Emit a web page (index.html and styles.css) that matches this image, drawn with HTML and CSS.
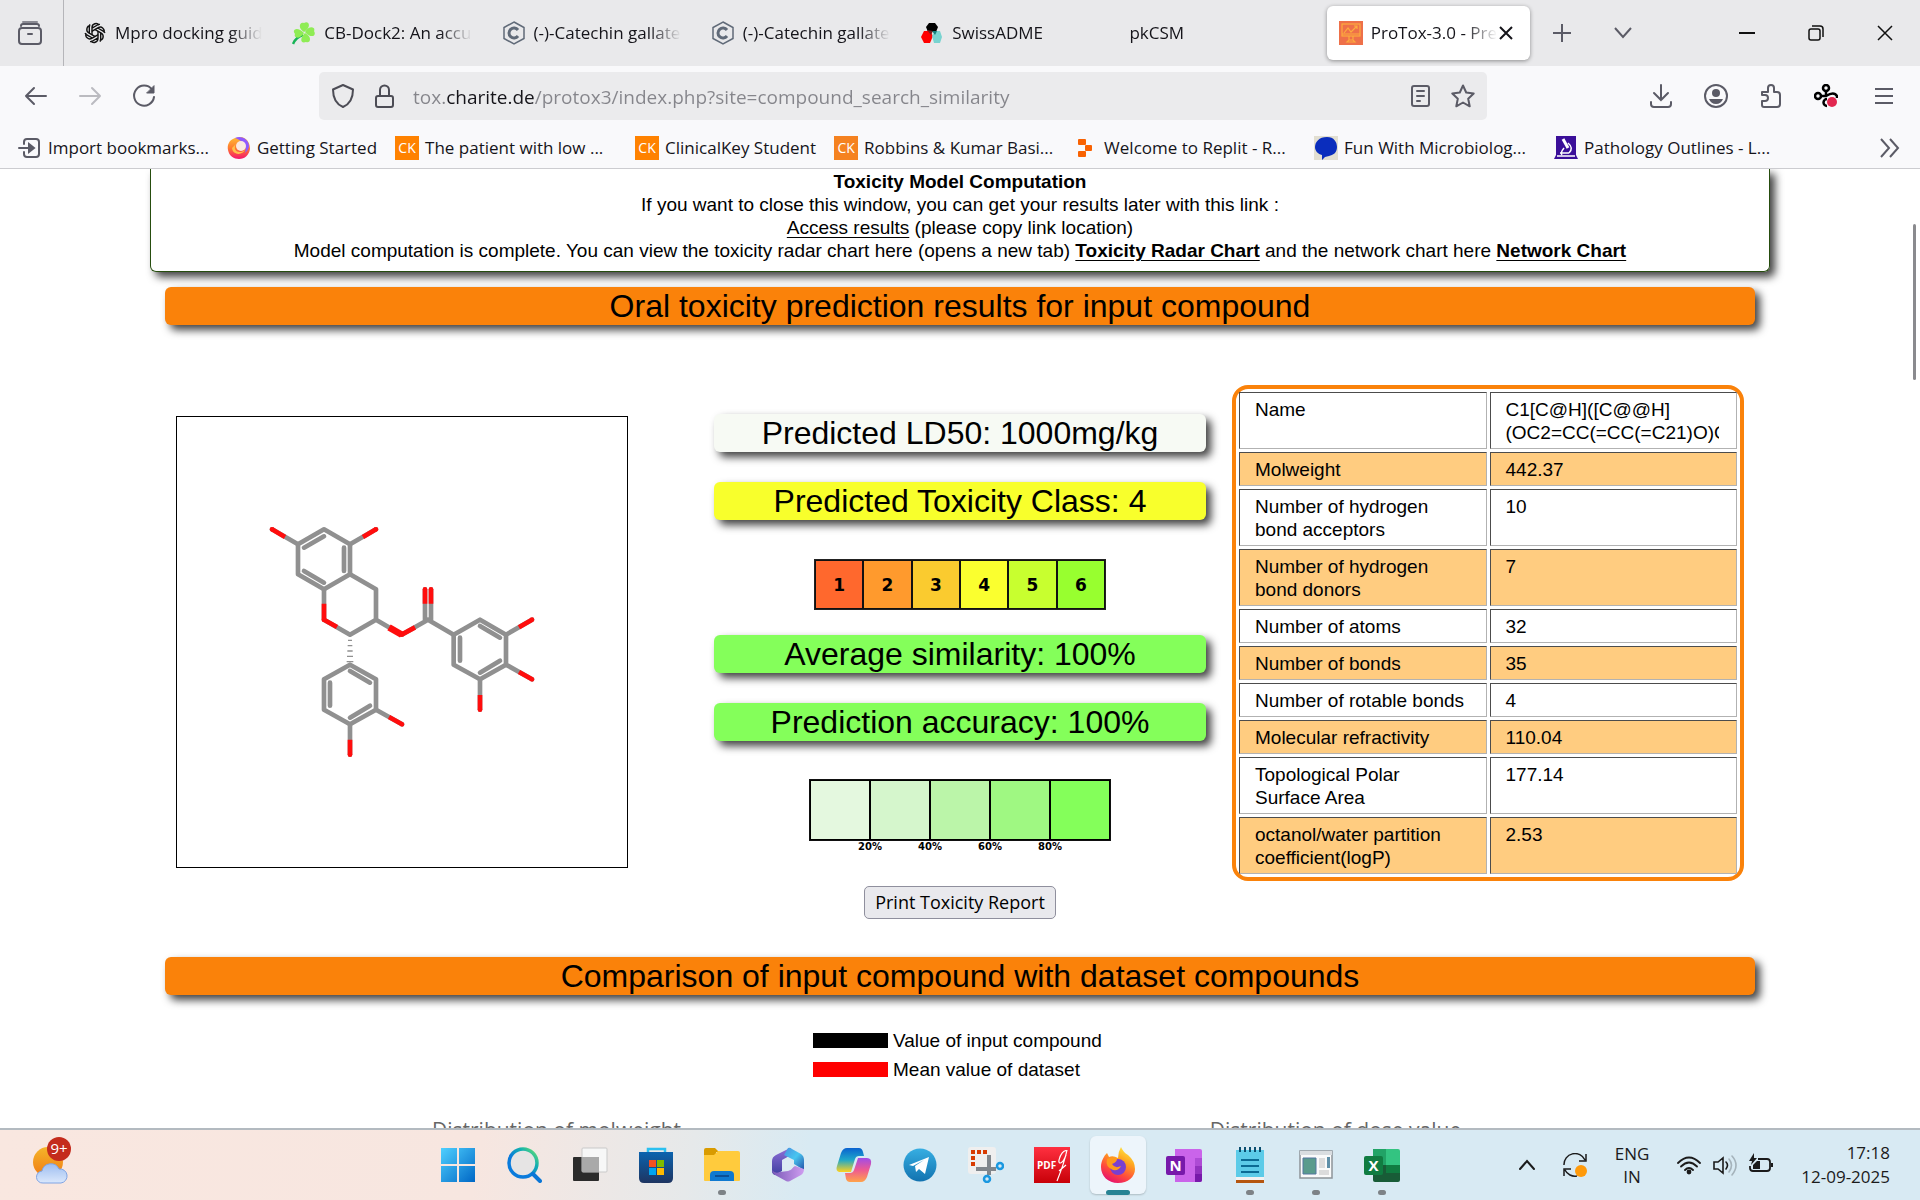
FILE: index.html
```html
<!DOCTYPE html>
<html lang="en">
<head>
<meta charset="utf-8">
<title>ProTox-3.0 - Prediction of toxicity of chemicals</title>
<link rel="stylesheet" href="styles.css">
</head>
<body>
<header class="browser">
  <div class="tabbar">
    <button class="recent" aria-label="Recent browsing"><svg width="24" height="24" viewBox="0 0 24 24" fill="none" stroke="#5b5b66" stroke-width="2" stroke-linecap="round"><path d="M5 1h14" stroke="#8a8a93"/><path d="M3 5c0-1 .5-2 2-2h14c1.500 0 2 1 2 2"/><rect x="1" y="7" width="22" height="16" rx="3"/><path d="M10 13h4"/></svg></button>
    <nav class="tabs" aria-label="Tabs">
      <button class="tab"><svg class="fav" viewBox="0 0 24 24" fill="none" stroke="#111" stroke-width="1.400" stroke-linejoin="round"><g id="petal"><path d="M9 14V6.500a4 4 0 0 1 7.200-2.300M9 7.200l5.500-3.200a4 4 0 0 1 2.500-.6"/></g><use href="#petal" transform="rotate(60 12 12)"/><use href="#petal" transform="rotate(120 12 12)"/><use href="#petal" transform="rotate(180 12 12)"/><use href="#petal" transform="rotate(240 12 12)"/><use href="#petal" transform="rotate(300 12 12)"/></svg><span class="title">Mpro docking guide</span></button>
      <button class="tab"><svg class="fav" viewBox="0 0 24 24"><path d="M11 14Q4 16 1 23" fill="none" stroke="#18b457" stroke-width="2.500"/><g fill="#8fec55"><path d="M12 11C5 7 8 0 12 2c5-3 8 4 0 9z"/><path d="M13 11c4-7 11-5 9-1 3 5-3 8-9 1z"/><path d="M13 12c8 4 5 11 1 9-5 2-7-3-1-9z"/><path d="M12 12c-4 7-11 5-9 1-4-5 3-8 9-1z"/></g></svg><span class="title">CB-Dock2: An accurate</span></button>
      <button class="tab"><svg class="fav" viewBox="0 0 24 24" fill="none" stroke="#606a78"><path d="M12 1l10 5.500v11L12 23 2 17.500v-11z" stroke-width="1.500"/><path d="M16 9a5 5 0 1 0 0 6" stroke-width="3"/></svg><span class="title">(-)-Catechin gallate</span></button>
      <button class="tab"><svg class="fav" viewBox="0 0 24 24" fill="none" stroke="#606a78"><path d="M12 1l10 5.500v11L12 23 2 17.500v-11z" stroke-width="1.500"/><path d="M16 9a5 5 0 1 0 0 6" stroke-width="3"/></svg><span class="title">(-)-Catechin gallate</span></button>
      <button class="tab"><svg class="fav" viewBox="0 0 24 24"><path d="M9 2h6l3 4-2 5H8L6 6z" fill="#000"/><path d="M4 10h6l3 5-3 7H4l-3-6z" fill="#f00"/><path d="M15 10h5l2 6-2 6h-6l-2-7z" fill="#79d3d0"/><path d="M7 9l6 1-2 4z" fill="#7a1d1d"/><path d="M12 10h5l-2 4z" fill="#157e7c"/></svg><span class="title">SwissADME</span></button>
      <button class="tab"><span class="title">pkCSM</span></button>
      <div class="tab active"><svg class="fav" viewBox="0 0 24 24" fill="none" stroke="#fdab3f" stroke-width="1.200"><path d="M0 0h24v24H0z" fill="#ee7049" stroke="none"/><rect x="3" y="3" width="18" height="12"/><path d="M5 12l4-5 3 4 6-6M15 5h3v3M3 13h18M10 15v4h4v-4M8 21l2-2h4l2 2z"/></svg><span class="title">ProTox-3.0 - Prediction</span><button class="close" aria-label="Close tab"><svg width="14" height="14" viewBox="0 0 14 14" stroke="#15141a" stroke-width="2"><path d="M1 1l12 12M13 1L1 13"/></svg></button></div>
    </nav>
    <div class="tabtools">
      <button aria-label="New tab"><svg width="18" height="18" viewBox="0 0 18 18" stroke="#5b5b66" stroke-width="2"><path d="M9 0v18M0 9h18"/></svg></button>
      <button aria-label="List all tabs"><svg width="18" height="18" viewBox="0 0 18 18" fill="none" stroke="#5b5b66" stroke-width="2"><path d="M1 4l8 9 8-9"/></svg></button>
    </div>
    <div class="winctl">
      <button aria-label="Minimise"><svg width="16" height="16" viewBox="0 0 16 16" stroke="#111" stroke-width="2"><path d="M0 8h16"/></svg></button>
      <button aria-label="Restore"><svg width="16" height="16" viewBox="0 0 16 16" fill="none" stroke="#111" stroke-width="1.500"><rect x="1" y="4" width="11" height="11" rx="2"/><path d="M4 1h8q3 0 3 3v8"/></svg></button>
      <button aria-label="Close"><svg width="16" height="16" viewBox="0 0 16 16" stroke="#111" stroke-width="1.500"><path d="M1 1l14 14M15 1L1 15"/></svg></button>
    </div>
  </div>
  <div class="navbar">
    <div class="history">
      <button aria-label="Back"><svg width="24" height="24" viewBox="0 0 24 24" fill="none" stroke="#5b5b66" stroke-width="2" stroke-linecap="round" stroke-linejoin="round"><path d="M22 12H2M10 4l-8 8 8 8"/></svg></button>
      <button aria-label="Forward" disabled><svg width="24" height="24" viewBox="0 0 24 24" fill="none" stroke="#bbbbc0" stroke-width="2" stroke-linecap="round" stroke-linejoin="round"><path d="M2 12h20M14 4l8 8-8 8"/></svg></button>
      <button aria-label="Reload"><svg width="24" height="24" viewBox="0 0 24 24" fill="none" stroke="#5b5b66" stroke-width="2" stroke-linecap="round"><path d="M20 5.500A10 10 0 1 0 22 13"/><path d="M22 2v7h-7z" fill="#5b5b66" stroke-width="1"/></svg></button>
    </div>
    <div class="urlbar">
      <svg width="24" height="24" viewBox="0 0 24 24" fill="none" stroke="#4c4c55" stroke-width="2" stroke-linejoin="round"><path d="M12 1l10 4.500C22 14 19 20 12 23 5 20 2 14 2 5.500z"/></svg>
      <svg width="24" height="24" viewBox="0 0 24 24" fill="none" stroke="#4c4c55" stroke-width="2"><rect x="4" y="12" width="17" height="11" rx="2"/><path d="M8 12V6a4.500 4.500 0 0 1 9 0v6"/></svg>
      <input class="url" type="text" aria-label="Address" value="tox.charite.de/protox3/index.php?site=compound_search_similarity">
      <button aria-label="Reader view"><svg width="24" height="24" viewBox="0 0 24 24" fill="none" stroke="#5b5b66" stroke-width="2" stroke-linecap="round"><rect x="2" y="2" width="17" height="20" rx="2"/><path d="M7 7h7M7 12h7M7 17h3"/></svg></button>
      <button aria-label="Bookmark this page"><svg width="24" height="24" viewBox="0 0 24 24" fill="none" stroke="#5b5b66" stroke-width="2" stroke-linejoin="round"><path d="M12 1.500l3.200 7 7.500 1-5.500 5.200 1.500 7.600L12 18.500l-6.700 3.800 1.500-7.600L1.300 9.500l7.500-1z"/></svg></button>
    </div>
    <div class="navtools">
      <button aria-label="Downloads"><svg width="24" height="24" viewBox="0 0 24 24" fill="none" stroke="#5b5b66" stroke-width="2" stroke-linecap="round"><path d="M12 1v15M5 9l7 7 7-7M2 18v2q0 3 3 3h14q3 0 3-3v-2"/></svg></button>
      <button aria-label="Account"><svg width="24" height="24" viewBox="0 0 24 24"><circle cx="12" cy="12" r="11" fill="none" stroke="#5b5b66" stroke-width="2"/><circle cx="12" cy="9" r="4" fill="#5b5b66"/><path d="M5 15h14q-2 5-7 5t-7-5z" fill="#5b5b66"/></svg></button>
      <button aria-label="Extensions"><svg width="24" height="24" viewBox="0 0 24 24" fill="none" stroke="#5b5b66" stroke-width="2" stroke-linejoin="round"><path d="M3 8h6V4a3 3 0 0 1 6 0v4h3q3 0 3 3v9q0 3-3 3H5q-2 0-2-2v-4h3a3 3 0 0 0 0-6H3z"/></svg></button>
      <button aria-label="Proxy extension"><svg width="24" height="24" viewBox="0 0 24 24" fill="none" stroke="#000" stroke-width="2.500"><circle cx="12" cy="4" r="3"/><circle cx="4" cy="12" r="3"/><path d="M7 12h5q8-5 11 0v2M12 7v5"/><path d="M13 15a3.500 3.500 0 0 0 0 7"/><circle cx="18" cy="18" r="5" fill="#e22850" stroke="none"/></svg></button>
      <button aria-label="Menu"><svg width="24" height="24" viewBox="0 0 24 24" stroke="#5b5b66" stroke-width="2"><path d="M6 5h18M6 12h18M6 19h18"/></svg></button>
    </div>
  </div>
  <nav class="bookmarks" aria-label="Bookmarks">
    <a href="#"><svg width="24" height="24" viewBox="0 0 24 24" fill="none" stroke="#5b5b66" stroke-width="2" stroke-linecap="round"><path d="M6 8V6q0-3 3-3h9q3 0 3 3v12q0 3-3 3H9q-3 0-3-3v-2M1 12h13"/><path d="M11 8l5 4-5 4z" fill="#5b5b66"/></svg>Import bookmarks...</a>
    <a href="#"><svg width="24" height="24" viewBox="0 0 24 24"><defs><linearGradient id="gs" x1="0" y1="0" x2="0" y2="1"><stop offset="0" stop-color="#ffbd35"/><stop offset=".5" stop-color="#ff7b2f"/><stop offset="1" stop-color="#f5156c"/></linearGradient></defs><path d="M8 2C2 4 0 9 1 14c1 6 6 9 11 9 6 0 10-4 11-10 0-5-2-10-8-12z" fill="url(#gs)"/><path d="M8 2c7-3 14 2 14 8 0 3-2 5-4 7 2-6-1-12-10-15z" fill="#9059ff"/><circle cx="14" cy="10" r="5" fill="#fbe8e0"/><path d="M9 8c-4 6 3 11 9 6-2 5-12 6-13-2z" fill="#ffc14b"/></svg>Getting Started</a>
    <a href="#" class="cut"><i class="ck">CK</i>The patient with low ...</a>
    <a href="#"><i class="ck">CK</i>ClinicalKey Student</a>
    <a href="#" class="cut"><i class="ck soft">CK</i>Robbins &amp; Kumar Basi...</a>
    <a href="#" class="cut"><svg width="24" height="24" viewBox="0 0 24 24" fill="#f96202"><rect x="4" y="3" width="8" height="6" rx="1"/><rect x="11" y="9" width="7" height="6" rx="1"/><rect x="4" y="15" width="8" height="6" rx="1"/></svg>Welcome to Replit - R...</a>
    <a href="#" class="cut"><svg width="24" height="24" viewBox="0 0 24 24"><path d="M0 0h24v24H0z" fill="#e2dfd2"/><path d="M13 1c7 0 10 5 10 10 0 6-4 8-8 9l-4 1-3 3v-5c-4-1-7-4-7-8C1 6 5 1 13 1z" fill="#0a2dbd"/></svg>Fun With Microbiolog...</a>
    <a href="#" class="cut"><svg width="24" height="24" viewBox="0 0 24 24" fill="none" stroke="#fff" stroke-width="1.500"><path d="M2 0h20v19l2 4H0l2-4z" fill="#3b0f99" stroke="none"/><path d="M3 20h18M6 17h9" /><path d="M9 3l5 9" stroke-width="3"/><path d="M14 7q6 5 1 10M10 12q-4 5-2 7"/></svg>Pathology Outlines - L...</a>
    <button class="more" aria-label="More bookmarks"><svg width="24" height="24" viewBox="0 0 24 24" fill="none" stroke="#5b5b66" stroke-width="2"><path d="M3 3l8 9-8 9M12 3l8 9-8 9"/></svg></button>
  </nav>
</header>

<main class="page">
  <section class="notice">
    <strong>Toxicity Model Computation</strong>
    <p>If you want to close this window, you can get your results later with this link :</p>
    <p><a href="#">Access results</a> (please copy link location)</p>
    <p>Model computation is complete. You can view the toxicity radar chart here (opens a new tab) <a href="#"><b>Toxicity Radar Chart</b></a> and the network chart here <a href="#"><b>Network Chart</b></a></p>
  </section>

  <h1 class="bar orange">Oral toxicity prediction results for input compound</h1>

  <section class="results">
    <div class="molecule">
      <svg viewBox="51 51 1350 1350" fill="none" stroke="#909090" stroke-width="14" stroke-linecap="round" stroke-linejoin="round">
        <path d="M414 433L492 388 570 433V523L492 568 414 523zM432 443L492 409M552 443V513M492 548L432 513"/>
        <path d="M570 523L648 568V659L570 704 492 659V568M648 659L725 704 804 659 881 704M795 659V568M813 659V568"/>
        <path d="M881 704L960 659 1038 704V794L960 838 881 794zM960 678L1020 713M1020 782L960 818M900 713V782"/>
        <path d="M570 794L648 838V929L570 973 492 929V838zM570 813L630 848M630 917L570 953M510 848V917"/>
        <path d="M414 433L336 388M570 433L648 388M1038 704L1116 659M1038 794L1116 838M960 838V929M648 929L726 973M570 973V1064"/>
        <g stroke="#ff0d0d" stroke-linecap="butt"><path d="M492 611V659L531 681M765 682L725 704M795 611V568M813 611V568M375 411L336 388M609 411L648 388M1077 682L1116 659M1077 816L1116 838M960 885V929M687 951L726 973M570 1019V1064"/><path d="M687 682L725 704" stroke-width="20"/></g>
        <g stroke="#ff0d0d"><path d="M492 659h0M725 704h0M795 568h0M813 568h0M336 388h0M648 388h0M1116 659h0M1116 838h0M960 929h0M726 973h0M570 1064h0"/></g>
        <path d="M564 721h12M563 737h14M562 753h16M561 769h18M560 785h20" stroke-width="4" stroke-linecap="butt"/>
      </svg>
    </div>

    <div class="scores">
      <h2 class="bar pale">Predicted LD50: 1000mg/kg</h2>
      <h2 class="bar yellow">Predicted Toxicity Class: 4</h2>
      <ol class="classes">
        <li class="c1">1</li><li class="c2">2</li><li class="c3">3</li><li class="c4">4</li><li class="c5">5</li><li class="c6">6</li>
      </ol>
      <h2 class="bar green">Average similarity: 100%</h2>
      <h2 class="bar green">Prediction accuracy: 100%</h2>
      <div class="percent">
        <div class="cells"><span class="p1"></span><span class="p2"></span><span class="p3"></span><span class="p4"></span><span class="p5"></span></div>
        <div class="ticks"><span>20%</span><span>40%</span><span>60%</span><span>80%</span></div>
      </div>
      <button class="print">Print Toxicity Report</button>
    </div>

    <table class="props">
      <tr><th scope="row">Name</th><td><div class="smiles">C1[C@H]([C@@H]<br>(OC2=CC(=CC(=C21)O)O)</div></td></tr>
      <tr><th scope="row">Molweight</th><td>442.37</td></tr>
      <tr><th scope="row">Number of hydrogen bond acceptors</th><td>10</td></tr>
      <tr><th scope="row">Number of hydrogen bond donors</th><td>7</td></tr>
      <tr><th scope="row">Number of atoms</th><td>32</td></tr>
      <tr><th scope="row">Number of bonds</th><td>35</td></tr>
      <tr><th scope="row">Number of rotable bonds</th><td>4</td></tr>
      <tr><th scope="row">Molecular refractivity</th><td>110.04</td></tr>
      <tr><th scope="row">Topological Polar Surface Area</th><td>177.14</td></tr>
      <tr><th scope="row">octanol/water partition coefficient(logP)</th><td>2.53</td></tr>
    </table>
  </section>

  <h1 class="bar orange">Comparison of input compound with dataset compounds</h1>

  <ul class="legend">
    <li><span class="swatch black"></span>Value of input compound</li>
    <li><span class="swatch red"></span>Mean value of dataset</li>
  </ul>

  <section class="charts">
    <h3>Distribution of molweight</h3>
    <h3>Distribution of dose value</h3>
  </section>
  <div class="scrollthumb"></div>
</main>

<footer class="taskbar">
  <button class="widgets" aria-label="Weather">
    <svg width="40" height="40" viewBox="0 0 40 40"><defs><linearGradient id="sun" x1="0" y1="0" x2="0" y2="1"><stop offset="0" stop-color="#f5b52a"/><stop offset="1" stop-color="#f07a13"/></linearGradient><linearGradient id="cloud" x1="0" y1="0" x2="0" y2="1"><stop offset="0" stop-color="#9dbdf0"/><stop offset="1" stop-color="#dbe8fc"/></linearGradient></defs><circle cx="17" cy="17" r="15" fill="url(#sun)"/><path d="M12 38a6 6 0 0 1-1-12 9 9 0 0 1 17-2 7 7 0 0 1 2 14z" fill="url(#cloud)" stroke="#7fa4e4"/></svg>
    <span class="badge">9+</span>
  </button>
  <nav class="apps" aria-label="Pinned apps">
    <button aria-label="Start"><svg viewBox="0 0 36 36"><defs><linearGradient id="win" x1="0" y1="0" x2="1" y2="1"><stop offset="0" stop-color="#4fd0ff"/><stop offset="1" stop-color="#0067c5"/></linearGradient></defs><path d="M1 1h16v16H1zM19 1h16v16H19zM1 19h16v16H1zM19 19h16v16H19z" fill="url(#win)"/></svg></button>
    <button aria-label="Search"><svg viewBox="0 0 36 36" fill="none"><defs><linearGradient id="srch" x1="0" y1="1" x2="1" y2="0"><stop offset=".4" stop-color="#0a7bdc"/><stop offset=".7" stop-color="#12b0b0"/><stop offset="1" stop-color="#6fe36c"/></linearGradient></defs><circle cx="17" cy="16" r="14" fill="#e6e4e4" stroke="url(#srch)" stroke-width="3.500"/><path d="M27 27l7 7" stroke="#0a76d6" stroke-width="4" stroke-linecap="round"/></svg></button>
    <button aria-label="Task view"><svg viewBox="0 0 36 36"><rect x="1" y="10" width="26" height="24" rx="1" fill="#2b2b2b"/><rect x="10" y="1" width="25" height="24" rx="1" fill="#f7f7f7" stroke="#c9c9c9"/><path d="M10 10h17v15H10z" fill="#a9a9a9"/></svg></button>
    <button aria-label="Store"><svg viewBox="0 0 36 36"><defs><linearGradient id="store" x1="0" y1="0" x2="0" y2="1"><stop offset="0" stop-color="#0b63af"/><stop offset="1" stop-color="#1e3561"/></linearGradient></defs><path d="M10 6V2h17v4" fill="none" stroke="#2bc0f0" stroke-width="2.500"/><path d="M1 5h34v26q0 5-5 5H6q-5 0-5-5z" fill="url(#store)"/><path d="M11 13h7v7h-7z" fill="#f25022"/><path d="M19 13h7v7h-7z" fill="#7fba00"/><path d="M11 21h7v7h-7z" fill="#00a4ef"/><path d="M19 21h7v7h-7z" fill="#ffb900"/></svg></button>
    <button aria-label="File Explorer" class="open"><svg viewBox="0 0 36 36"><path d="M0 3q0-2 2-2h9l4 4h-3v4H0z" fill="#d99b00"/><path d="M0 8h10l4-4h20q2 0 2 2v27q0 1-1 1H1q-1 0-1-1z" fill="#ffcb3d"/><path d="M6 34V28q0-4 4-4h16q4 0 4 4v6z" fill="#0f79d0"/><path d="M11 29h14" stroke="#0a4f97" stroke-width="2"/></svg></button>
    <button aria-label="Microsoft 365"><svg viewBox="0 0 36 36"><defs><linearGradient id="m3" x1="0" y1="0" x2="0" y2="1"><stop offset="0" stop-color="#8f6fd8"/><stop offset="1" stop-color="#3e3fa0"/></linearGradient><linearGradient id="m4" x1="0" y1="0" x2="1" y2="1"><stop offset="0" stop-color="#4a8fe0"/><stop offset=".5" stop-color="#48c6f0"/><stop offset="1" stop-color="#2450a8"/></linearGradient><linearGradient id="m5" x1="0" y1="0" x2="1" y2="0"><stop offset="0" stop-color="#7a5ab8"/><stop offset="1" stop-color="#cf9df0"/></linearGradient></defs><path d="M20 1L6 8q-4 2-4 6v10q0 3 3 4l7-4V13l9-5z" fill="url(#m3)"/><path d="M18 1q2-1 4 1l9 5q3 2 3 6v10l-10-6v-4l-10-5z" fill="url(#m4)"/><path d="M34 22q0 4-3 6l-11 6q-2 1-4 0L5 28q-3-2-3-5 3 4 8 2l8-1 7-5z" fill="url(#m5)"/><circle cx="18" cy="18" r="5.500" fill="#dcebf3"/></svg></button>
    <button aria-label="Copilot"><svg viewBox="0 0 36 36"><defs><linearGradient id="cp1" x1="0" y1="0" x2="0" y2="1"><stop offset="0" stop-color="#0a62d0"/><stop offset=".5" stop-color="#20a8c9"/><stop offset="1" stop-color="#ffd21d"/></linearGradient><linearGradient id="cp2" x1="0" y1="0" x2="0" y2="1"><stop offset="0" stop-color="#a04ce8"/><stop offset=".5" stop-color="#ee5a91"/><stop offset="1" stop-color="#ffa34a"/></linearGradient></defs><path d="M11 1h12q3 0 4 4l1 4h-5q-3 0-4 3l-4 13H5q-6 0-4-6L5 6q2-5 6-5z" fill="url(#cp1)"/><path d="M25 35H14q-3 0-4-3l-1-6h5q3 0 4-3l4-12h9q5 0 4 6l-4 13q-2 5-6 5z" fill="url(#cp2)"/></svg></button>
    <button aria-label="Telegram"><svg viewBox="0 0 36 36"><defs><linearGradient id="tg" x1="0" y1="0" x2="0" y2="1"><stop offset="0" stop-color="#37aee2"/><stop offset="1" stop-color="#1273b0"/></linearGradient></defs><circle cx="18" cy="18" r="16.500" fill="url(#tg)"/><path d="M7 18L27 10l-4 17-6-5-3 3-1-6 9-6-11 6z" fill="#fff"/></svg></button>
    <button aria-label="Snipping Tool"><svg viewBox="0 0 36 36" fill="none"><rect x="0" y="0" width="28" height="27" rx="3" fill="#efefef"/><path d="M5 19V5h15" stroke="#d83b01" stroke-width="4" stroke-dasharray="4 2"/><path d="M21 8v20M8 22h20" stroke="#80868c" stroke-width="4"/><circle cx="32" cy="19" r="3" stroke="#1a98e0" stroke-width="2.500"/><circle cx="19" cy="32" r="3" stroke="#1a98e0" stroke-width="2.500"/></svg></button>
    <button aria-label="PDF reader"><span class="pdf">PDF<svg viewBox="0 0 12 34" fill="none" stroke="#fff"><path d="M1 33C5 23 9 12 11 2M11 3C8 1 4 7 3 12c-1 5 4 4 7-5M3 23l7-6" stroke-width="1.200"/></svg></span></button>
    <button aria-label="Firefox" class="current"><svg viewBox="0 0 36 36"><defs><linearGradient id="ff" x1=".8" y1="0" x2=".3" y2="1"><stop offset="0" stop-color="#fff04a"/><stop offset=".35" stop-color="#ffa51f"/><stop offset=".7" stop-color="#ff4a3c"/><stop offset="1" stop-color="#e5106f"/></linearGradient></defs><path d="M21 0q2 5 7 8 7 6 7 14c0 8-7 14-17 14S1 29 1 20C1 14 4 9 7 6l2 4q4-2 9 1 0-6 3-11z" fill="url(#ff)"/><circle cx="18" cy="20" r="8" fill="#7a3fd0"/><path d="M7 12q5-3 10 0 0 3-5 5 3 5 9 2-2 5-8 4-8-3-6-11z" fill="#ff9a1c"/></svg></button>
    <button aria-label="OneNote"><svg viewBox="0 0 36 36"><path d="M9 2h25q2 0 2 2v29q0 2-2 2H9z" fill="#ca64ea"/><path d="M29 11h7v8h-7z" fill="#ae4bd5"/><path d="M29 19h7v8h-7z" fill="#9332bf"/><path d="M29 27h7v6q0 2-2 2h-5z" fill="#7719aa"/><rect y="9" width="19" height="19" rx="2" fill="#7719aa"/></svg><b class="letter">N</b></button>
    <button aria-label="Notepad" class="open"><svg viewBox="0 0 36 36"><path d="M4 3h28v29H4z" fill="#5ccbe8"/><path d="M4 30h28v3H4z" fill="#f2f2f2"/><path d="M4 33h28v3H4z" fill="#b5560f"/><path d="M9 13h18M9 19h18M9 25h18" stroke="#0b6b94" stroke-width="2"/><path d="M8 0v5M13 0v5M18 0v5M23 0v5M28 0v5" stroke="#0b4f70" stroke-width="2"/></svg></button>
    <button aria-label="Application" class="open"><svg viewBox="0 0 36 36"><rect x="2" y="4" width="32" height="27" fill="#fafafa" stroke="#8d9499" stroke-width="1.500"/><path d="M2 4h32v4H2z" fill="#d9dde0"/><path d="M5 11h13v16H5z" fill="#5a9b8c" stroke="#5577a0"/><path d="M21 11h6v10h-6zM21 23h10v5H21z" fill="#dcdcdc"/><path d="M29 10h3v11h-3z" fill="#5f8fa8"/></svg></button>
    <button aria-label="Excel" class="open"><svg viewBox="0 0 36 36"><path d="M9 2h13v16H9z" fill="#21a366"/><path d="M22 2h12q2 0 2 2v14H22z" fill="#33c481"/><path d="M9 18h27v15q0 2-2 2H11q-2 0-2-2z" fill="#185c37"/><path d="M22 18h14v8H22z" fill="#107c41"/><rect y="9" width="19" height="19" rx="2" fill="#107c41"/></svg><b class="letter">X</b></button>
  </nav>
  <div class="tray">
    <button aria-label="Show hidden icons"><svg width="16" height="16" viewBox="0 0 16 16" fill="none" stroke="#1b1b1b" stroke-width="2" stroke-linecap="round"><path d="M1 12l7-8 7 8"/></svg></button>
    <button aria-label="Updates"><svg width="24" height="24" viewBox="0 0 24 24" fill="none" stroke="#1b1b1b" stroke-width="1.500"><path d="M1 12A11 11 0 0 1 22 7M23 1v7h-7M1 23v-7h7M2 17a11 11 0 0 0 12 6"/><circle cx="18" cy="18" r="6" fill="#ff9a0a" stroke="none"/></svg></button>
    <button class="lang" aria-label="Keyboard language">ENG<br>IN</button>
    <button class="quick" aria-label="Quick settings">
      <svg width="24" height="24" viewBox="0 0 24 24" fill="none" stroke="#1b1b1b" stroke-width="1.800" stroke-linecap="round"><path d="M1 10q11-11 22 0M4 13.500q8-8 16 0M8 17q4-4 8 0"/><circle cx="12" cy="19" r="1.500" fill="#1b1b1b"/></svg>
      <svg width="24" height="24" viewBox="0 0 24 24" fill="none" stroke="#1b1b1b" stroke-width="1.600" stroke-linecap="round"><path d="M1 9h4l5-4v15l-5-4H1zM13 9q3 3 0 7"/><path d="M16 6q5 6 0 13M19 3q8 9 0 19" stroke="#a5b3bb"/></svg>
      <svg width="24" height="24" viewBox="0 0 24 24" fill="none" stroke="#1b1b1b" stroke-width="1.800"><path d="M9 6h9q3 0 3 3v6q0 3-3 3H4q-3 0-3-3v-2"/><path d="M4 16v-4l4-4h3v8z" fill="#1b1b1b" stroke="none"/><path d="M23 10v4" stroke-width="2"/><path d="M5 0L0 8h3l-1 4 6-7H5z" fill="#1b1b1b" stroke="none"/></svg>
    </button>
    <button class="clock">17:18<br>12-09-2025</button>
  </div>
</footer>
</body>
</html>
```
FILE: styles.css
```css
* { box-sizing: border-box; }

body {
  margin: 0;
  height: 100vh;
  display: flex;
  flex-direction: column;
  overflow: hidden;
  background: #fff;
  color: #000;
  font: 19px/23px "Liberation Sans", Arial, sans-serif;
}

h1, h2, h3, p, ol, ul { margin: 0; padding: 0; font-weight: normal; }
ol, ul { list-style: none; }
svg { display: block; flex: none; }

button {
  border: 0;
  padding: 0;
  background: none;
  color: inherit;
  font: inherit;
}

/* Browser chrome */
.browser {
  flex: none;
  background: #f9f9fb;
  border-bottom: 1px solid #ccccd0;
  color: #15141a;
  font: 17px/24px "Open Sans", "Noto Sans", sans-serif;
}

.tabbar {
  display: flex;
  align-items: center;
  height: 66px;
  background: #e9e9eb;
}

.recent {
  width: 64px;
  height: 66px;
  padding-left: 18px;
  border-right: 1px solid #b5b5b9;
}

.tabs {
  flex: 1;
  display: grid;
  grid-template-columns: repeat(7, 1fr);
  gap: 6px;
  padding-left: 7px;
}

.tab {
  display: flex;
  align-items: center;
  gap: 8px;
  min-width: 0;
  height: 54px;
  padding: 0 12px;
  text-align: left;
}

.fav { width: 24px; height: 24px; }

.tab .title {
  flex: 1;
  min-width: 0;
  overflow: hidden;
  white-space: nowrap;
  mask-image: linear-gradient(to left, transparent, #000 32px);
}

.tab.active {
  background: #fff;
  border-radius: 6px;
  box-shadow: 0 1px 4px rgba(0, 0, 0, .4);
}

.active .title { margin-right: -6px; }
.active .close { margin-right: 5px; }

.tabtools { display: flex; gap: 43px; padding-left: 23px; }
.winctl { display: flex; gap: 53px; padding: 0 27px 0 107px; }

.navbar {
  display: flex;
  align-items: center;
  height: 60px;
}

.history { display: flex; gap: 30px; width: 319px; padding-left: 24px; }

.urlbar {
  flex: 1;
  display: flex;
  align-items: center;
  gap: 17px;
  height: 48px;
  padding: 0 12px;
  border-radius: 5px;
  background: #ebebed;
}

.url {
  flex: 1;
  min-width: 0;
  height: 34px;
  border: 0;
  padding: 2px 0 0;
  outline: 0;
  font: 19px/32px "Open Sans", "Noto Sans", sans-serif;
  background: linear-gradient(to right, #85858b 33px, #15141a 33px, #15141a 122px, #85858b 122px);
  background-clip: text;
  color: transparent;
}

.navtools { display: flex; gap: 31px; width: 433px; padding-left: 162px; }

.bookmarks {
  display: flex;
  align-items: center;
  gap: 18px;
  height: 42px;
  padding: 1px 18px 0;
  font-size: 17px;
  white-space: nowrap;
}

.bookmarks a {
  display: flex;
  align-items: center;
  gap: 6px;
  color: inherit;
  text-decoration: none;
}

.bookmarks .cut { width: 222px; }

.ck {
  width: 24px;
  background: #ff8200;
  color: #fff;
  font-size: 14px;
  font-style: normal;
  text-align: center;
}

.ck.soft { background: #f58220; }
.more { margin-left: auto; }

/* Results page */
.page {
  flex: 1;
  min-height: 0;
  position: relative;
  overflow: hidden;
}

.notice {
  width: 1620px;
  max-width: 100%;
  margin: 0 auto 15px;
  padding: 1px 0 9px;
  border: 1px solid #264d0e;
  border-top: 0;
  border-radius: 0 0 6px 6px;
  box-shadow: 5px 5px 9px rgba(0, 0, 0, .75);
  text-align: center;
}

.notice a { color: #000; text-underline-offset: 3px; }

.bar {
  height: 38px;
  border-radius: 6px;
  box-shadow: 5px 5px 9px rgba(0, 0, 0, .75);
  font-size: 32px;
  line-height: 38px;
  text-align: center;
}

.orange { width: 1590px; max-width: 100%; margin: 0 auto; background: #fa820a; }
.pale { background: #f7faf4; }
.yellow { background: #f8ff2c; }
.green { background: #84ff5a; }

.results {
  display: flex;
  justify-content: space-between;
  align-items: flex-start;
  width: 1568px;
  max-width: 100%;
  margin: 60px auto 38px;
}

.molecule { width: 452px; margin-top: 31px; border: 1px solid #000; }

.scores {
  display: flex;
  flex-direction: column;
  align-items: center;
  width: 492px;
  margin: 29px 0 0 60px;
}

.scores .bar { width: 100%; margin-bottom: 30px; }

.classes {
  display: flex;
  width: 292px;
  margin: 9px 0 25px;
  border: 1px solid #222;
  font: bold 17px/49px "DejaVu Sans", sans-serif;
  text-align: center;
}

.classes li { flex: 1; height: 49px; border: 1px solid #111; }
.c1 { background: #ff682d; }
.c2 { background: #ff9a2d; }
.c3 { background: #facb2f; }
.c4 { background: #faff2f; }
.c5 { background: #c8ff2f; }
.c6 { background: #98ff2f; }

.percent { width: 302px; margin: 8px 0 34px; }
.cells { display: flex; border: 1px solid #111; }
.cells span { flex: 1; height: 60px; border: 1px solid #000; }
.p1 { background: #e4f8df; }
.p2 { background: #d5f6cc; }
.p3 { background: #bbf5a9; }
.p4 { background: #9ff882; }
.p5 { background: #84ff5a; }

.ticks {
  display: flex;
  justify-content: center;
  font: bold 10px/11px "DejaVu Sans", sans-serif;
}

.ticks span { width: 60px; text-align: center; }

.print {
  height: 33px;
  padding: 0 10px;
  border: 1px solid #8f8f9d;
  border-radius: 5px;
  background: #e9e9ed;
  font: 18px/31px "Open Sans", "Noto Sans", sans-serif;
}

.props {
  width: 512px;
  table-layout: fixed;
  border: 4px solid #fa820a;
  border-radius: 16px;
  border-spacing: 3px;
}

.props th, .props td {
  padding: 5px 17px 4px 15px;
  border: 1px solid;
  border-color: #4c4c4c #b2b2b2 #b2b2b2 #4c4c4c;
  font-weight: normal;
  text-align: left;
  vertical-align: top;
}

.props tr:nth-child(even) > * { background: #ffcc80; }
.smiles { overflow: hidden; white-space: nowrap; }

.legend {
  display: flex;
  flex-direction: column;
  gap: 6px;
  width: 294px;
  margin: 34px auto 35px;
}

.legend li { display: flex; align-items: center; gap: 5px; }
.swatch { width: 75px; height: 15px; }
.black { background: #000; }
.red { background: #f00; }

.charts {
  display: grid;
  grid-template-columns: 1fr 1fr;
  width: 1558px;
  max-width: 100%;
  margin: 0 auto;
  padding-right: 28px;
  box-sizing: content-box;
}

.charts h3 {
  color: #666;
  font: 21px/28px "Open Sans", "Noto Sans", sans-serif;
  text-align: center;
}

.scrollthumb {
  position: absolute;
  top: 55px;
  right: 4px;
  width: 3px;
  height: 156px;
  border-radius: 2px;
  background: #8a8a8e;
}

/* Taskbar */
.taskbar {
  flex: none;
  display: grid;
  grid-template-columns: 425fr 990px 505fr;
  align-items: center;
  height: 72px;
  border-top: 2px solid #b3bac0;
  background: linear-gradient(100deg, #f9e7e0 0, #f7e6e0 25%, #e6e9ea 36%, #d8eaf3 42%, #d8eaf3 100%);
  color: #1b1b1b;
  font: 17px/24px "Open Sans", "Noto Sans", sans-serif;
}

.widgets { position: relative; width: 40px; margin-left: 31px; }

.badge {
  position: absolute;
  top: -8px;
  right: 0;
  width: 24px;
  height: 24px;
  border-radius: 12px;
  background: #c42b1c;
  color: #fff;
  font-size: 15px;
  line-height: 23px;
}

.apps { display: grid; grid-template-columns: repeat(15, 66px); }

.apps button {
  position: relative;
  display: grid;
  place-items: center;
  justify-self: center;
  width: 56px;
  height: 58px;
}

.apps button > svg { width: 36px; height: 36px; }
.current { border-radius: 6px; background: #edf5fb; box-shadow: 0 1px 2px rgba(0, 0, 0, .2); }

.open::after, .current::after {
  content: "";
  position: absolute;
  bottom: -1px;
  width: 8px;
  height: 5px;
  border-radius: 3px;
  background: #7d8286;
}

.current::after { width: 24px; background: #278394; }

.letter {
  position: absolute;
  left: 10px;
  width: 19px;
  color: #fff;
  font-size: 15px;
  line-height: 19px;
  text-align: center;
}

.pdf {
  display: flex;
  align-items: center;
  width: 36px;
  height: 36px;
  padding-left: 3px;
  background: linear-gradient(#ff3040, #c80008);
  color: #fff;
  font-size: 10px;
  font-weight: bold;
}

.pdf svg { width: 12px; height: 34px; }

.tray { display: flex; align-items: center; justify-content: flex-end; padding-right: 30px; }
.tray button { margin-left: 28px; }
.quick { display: flex; gap: 12px; }
.tray .lang { line-height: 23px; }
.tray .clock { text-align: right; }
```
